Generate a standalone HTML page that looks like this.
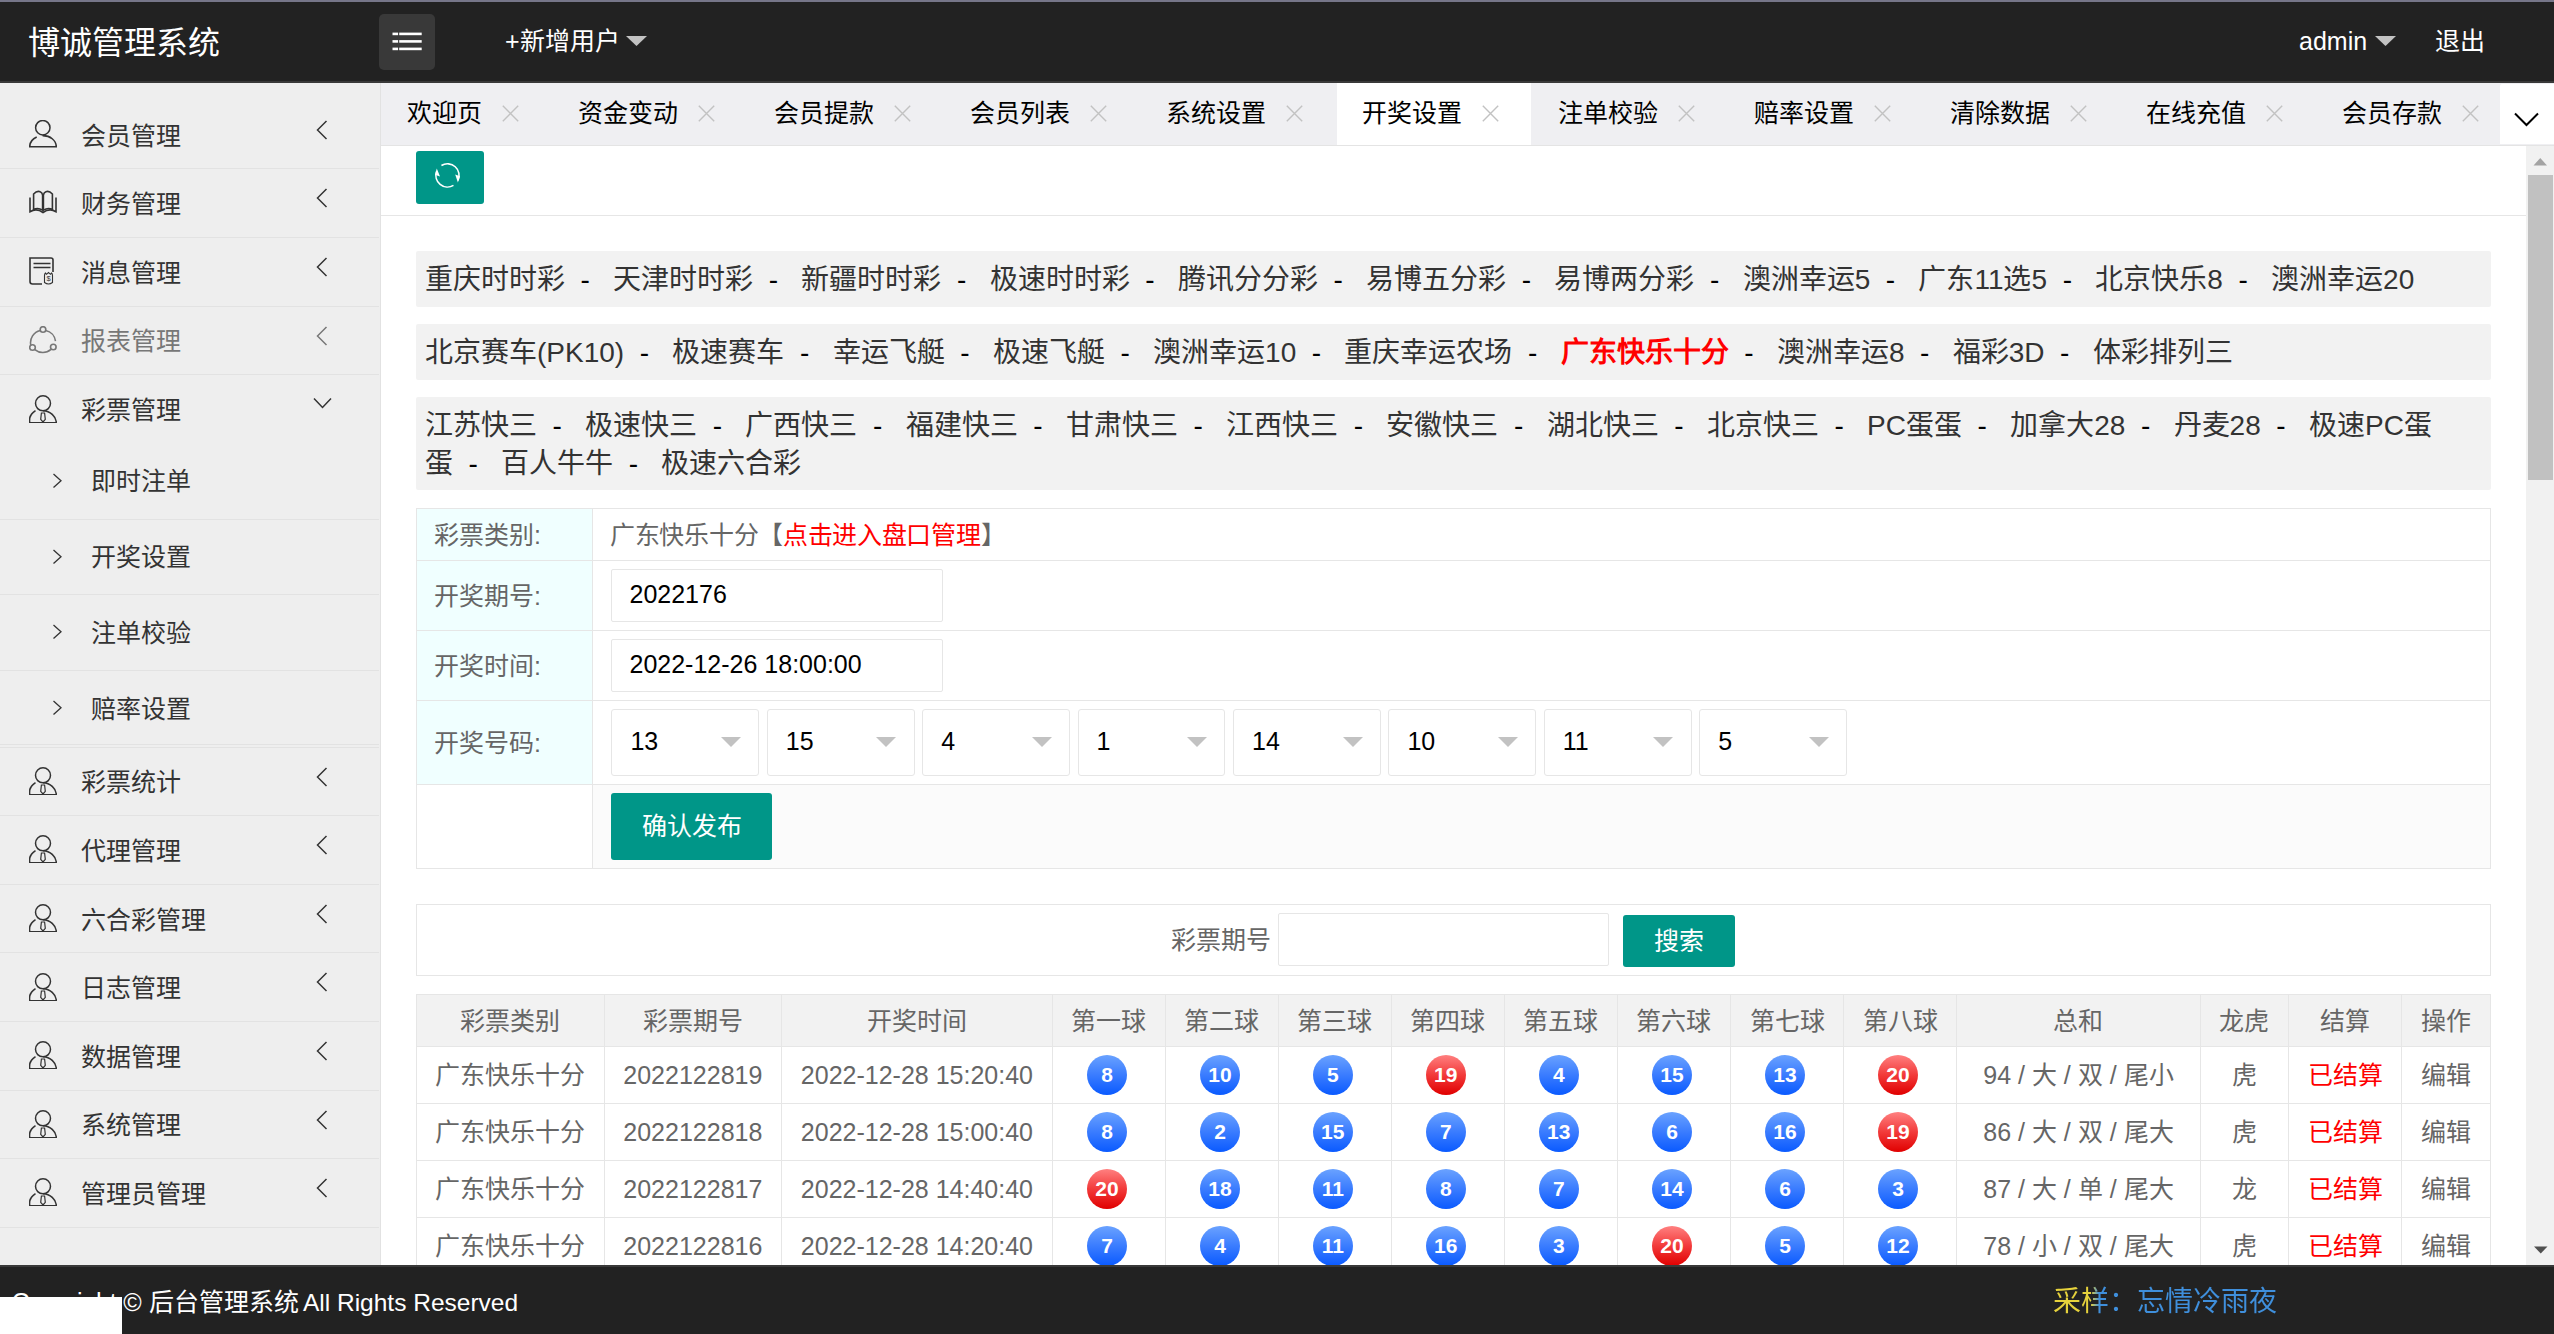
<!DOCTYPE html><html lang="zh-CN"><head><meta charset="utf-8"><title>开奖设置</title><style>
*{box-sizing:border-box;margin:0;padding:0}
html,body{width:2554px;height:1334px;overflow:hidden;background:#fff}
body{position:relative;font-family:"Liberation Sans",sans-serif;color:#333;font-size:25px}
.abs{position:absolute}
.nw{white-space:nowrap}
#strip{left:0;top:0;width:2554px;height:2px;background:#767689}
#hdr{left:0;top:2px;width:2554px;height:79px;background:#222}
#hdrline{left:0;top:81px;width:2554px;height:2px;background:#393939}
#side{left:0;top:83px;width:380px;height:1182px;background:#eee}
#sideb{left:380px;top:83px;width:1px;height:1182px;background:#e2e2e2}
#tabs{left:381px;top:83px;width:2173px;height:62px;background:#efeff2}
#tabsline{left:381px;top:145px;width:2173px;height:1px;background:#e4e4e4}
#foot{left:0;top:1265px;width:2554px;height:69px;background:#222}
#footline{left:0;top:1265px;width:2554px;height:2px;background:#393939}
.sep{height:1px;background:#e2e2e2;left:0;width:379px}
.mi{left:82px;color:#333;line-height:40px;height:40px}
.chev{left:316px}
.tab{top:83px;height:61px}
.tt{top:0;line-height:61px;color:#000;white-space:nowrap}
.lrow{left:416px;width:2075px;background:#f2f2f2;border-radius:2px;padding-left:9px;font-size:28px;color:#333;white-space:nowrap}
.lrow b{font-weight:normal;color:#000}
.lrow .red{color:#f00;font-weight:bold}
.ball{width:40px;height:40px;border-radius:50%;color:#fff;font-weight:bold;font-size:21px;line-height:40px;text-align:center;font-family:"Liberation Sans",sans-serif}
.bb{background:linear-gradient(180deg,#6aa2ff 0%,#3a7cff 50%,#0a5aff 100%)}
.rb{background:linear-gradient(180deg,#ff8080 0%,#f23a3a 50%,#e00000 100%)}
</style></head><body><div id="strip" class="abs"></div><div id="hdr" class="abs"></div><div id="hdrline" class="abs"></div><div class="abs nw" style="left:28px;top:23px;font-size:32px;line-height:40px;color:#fff">博诚管理系统</div><div class="abs" style="left:379px;top:14px;width:56px;height:56px;background:#393939;border-radius:5px"></div><svg class="abs" style="left:379px;top:14px" width="56" height="56"><g fill="#fff"><rect x="13.5" y="18.6" width="5.6" height="2.6"/><rect x="20.2" y="18.6" width="22.5" height="2.6"/><rect x="13.5" y="26.1" width="5.6" height="2.6"/><rect x="20.2" y="26.1" width="22.5" height="2.6"/><rect x="13.5" y="33.6" width="5.6" height="2.6"/><rect x="20.2" y="33.6" width="22.5" height="2.6"/></g></svg><div class="abs nw" style="left:505px;top:21px;font-size:25px;line-height:40px;color:#fff">+新增用户</div><svg class="abs" style="left:626px;top:36px" width="21" height="10"><path d="M0 0H21L10.5 10Z" fill="#c2c2c2"/></svg><div class="abs nw" style="left:2299px;top:21px;font-size:25px;line-height:40px;color:#fff">admin</div><svg class="abs" style="left:2375px;top:36px" width="21" height="10"><path d="M0 0H21L10.5 10Z" fill="#c2c2c2"/></svg><div class="abs nw" style="left:2435px;top:21px;font-size:25px;line-height:40px;color:#fff">退出</div><div id="side" class="abs"></div><div id="sideb" class="abs"></div><svg class="abs" style="left:29px;top:120.0px" width="28" height="28"><circle cx="13.8" cy="7.7" r="7.2" fill="none" stroke="#333" stroke-width="1.5"/><path d="M7.7 16.9 A13.3 11.1 0 0 0 0.75 26.7 H27.25 A13.3 11.1 0 0 0 13.6 15.6" fill="none" stroke="#333" stroke-width="1.6"/></svg><div class="abs nw" style="left:81px;top:115.5px;font-size:25px;line-height:40px;color:#333">会员管理</div><svg class="abs" style="left:315.5px;top:119.7px" width="12" height="22"><path d="M10.5 1 L1.5 10 L10.5 19" fill="none" stroke="#333" stroke-width="1.5"/></svg><svg class="abs" style="left:29px;top:188.7px" width="28" height="28"><g fill="none" stroke="#333" stroke-width="1.6" transform="translate(0,2)"><path d="M1 6.5V20.7 Q7.5 16.8 14 21.5 Q20.5 16.8 27 20.7V6.5"/><path d="M4.6 18.5V3 Q8 -0.6 11.2 0.8 Q13.2 1.6 13.6 4V19.2 Q9 16.2 4.6 18.5Z"/><path d="M23.4 18.5V3 Q20 -0.6 16.8 0.8 Q14.8 1.6 14.4 4V19.2 Q19 16.2 23.4 18.5Z"/></g></svg><div class="abs nw" style="left:81px;top:184.2px;font-size:25px;line-height:40px;color:#333">财务管理</div><svg class="abs" style="left:315.5px;top:188.4px" width="12" height="22"><path d="M10.5 1 L1.5 10 L10.5 19" fill="none" stroke="#333" stroke-width="1.5"/></svg><svg class="abs" style="left:29px;top:257.3px" width="28" height="28"><g fill="none" stroke="#333" stroke-width="1.6"><path d="M13 27H3.5Q1 27 1 24.5V1H22Q24 1 24 3V15"/><path d="M4.5 6.5H21.5M4.5 10.5H21.5" stroke-width="1.5"/><path d="M15.5 18.5Q15.5 17 16.5 16L17.5 17.3L19.5 15.5L21.5 17.3L22.5 16Q23.5 17 23.5 18.5V25.5Q19.5 28.5 15.5 25.5Z" stroke-width="1.1"/><text x="19.5" y="24.3" font-size="7.5" text-anchor="middle" fill="#333" stroke="none" font-family="Liberation Sans">$</text></g></svg><div class="abs nw" style="left:81px;top:252.8px;font-size:25px;line-height:40px;color:#333">消息管理</div><svg class="abs" style="left:315.5px;top:257.0px" width="12" height="22"><path d="M10.5 1 L1.5 10 L10.5 19" fill="none" stroke="#333" stroke-width="1.5"/></svg><svg class="abs" style="left:29px;top:325.9px" width="28" height="28"><g fill="none" stroke="#777" stroke-width="1.6"><circle cx="14" cy="3.5" r="2.8"/><circle cx="3.5" cy="21.5" r="2.8"/><circle cx="24.3" cy="21" r="2.8"/><path d="M11.3 4.5 A12.5 12.5 0 0 0 1.8 19.2"/><path d="M16.7 4.5 A12.5 12.5 0 0 1 26.5 15.2"/><path d="M5.8 23.6 A12.5 12.5 0 0 0 22 23.4"/></g></svg><div class="abs nw" style="left:81px;top:321.4px;font-size:25px;line-height:40px;color:#777">报表管理</div><svg class="abs" style="left:315.5px;top:325.6px" width="12" height="22"><path d="M10.5 1 L1.5 10 L10.5 19" fill="none" stroke="#777" stroke-width="1.5"/></svg><svg class="abs" style="left:29px;top:394.5px" width="28" height="28"><circle cx="14" cy="8.3" r="7.5" fill="none" stroke="#333" stroke-width="1.5"/><path d="M6.5 15.6 A14 12.5 0 0 0 0.7 27.7 H27.3 A14 12.5 0 0 0 14 15.8" fill="none" stroke="#333" stroke-width="1.6"/><path d="M12.4 18H15.6L16.3 24.4L14 27L11.7 24.4Z" fill="none" stroke="#333" stroke-width="1.2"/></svg><div class="abs nw" style="left:81px;top:390.0px;font-size:25px;line-height:40px;color:#333">彩票管理</div><svg class="abs" style="left:312.5px;top:396.5px" width="20" height="14"><path d="M1 1.5 L9.5 10.5 L18 1.5" fill="none" stroke="#333" stroke-width="1.5"/></svg><div class="abs sep" style="top:168.3px"></div><div class="abs sep" style="top:237.0px"></div><div class="abs sep" style="top:305.6px"></div><div class="abs sep" style="top:374.2px"></div><svg class="abs" style="left:51.5px;top:472.7px" width="11" height="16"><path d="M1.5 1 L9 7.8 L1.5 14.6" fill="none" stroke="#333" stroke-width="1.3"/></svg><div class="abs nw" style="left:91px;top:461.2px;font-size:25px;line-height:40px;color:#333">即时注单</div><div class="abs sep" style="top:518.6px"></div><svg class="abs" style="left:51.5px;top:548.5px" width="11" height="16"><path d="M1.5 1 L9 7.8 L1.5 14.6" fill="none" stroke="#333" stroke-width="1.3"/></svg><div class="abs nw" style="left:91px;top:537.0px;font-size:25px;line-height:40px;color:#333">开奖设置</div><div class="abs sep" style="top:594.4px"></div><svg class="abs" style="left:51.5px;top:624.3px" width="11" height="16"><path d="M1.5 1 L9 7.8 L1.5 14.6" fill="none" stroke="#333" stroke-width="1.3"/></svg><div class="abs nw" style="left:91px;top:612.8px;font-size:25px;line-height:40px;color:#333">注单校验</div><div class="abs sep" style="top:670.2px"></div><svg class="abs" style="left:51.5px;top:700.1px" width="11" height="16"><path d="M1.5 1 L9 7.8 L1.5 14.6" fill="none" stroke="#333" stroke-width="1.3"/></svg><div class="abs nw" style="left:91px;top:688.6px;font-size:25px;line-height:40px;color:#333">赔率设置</div><div class="abs sep" style="top:743.8px"></div><svg class="abs" style="left:29px;top:766.8px" width="28" height="28"><circle cx="14" cy="8.3" r="7.5" fill="none" stroke="#333" stroke-width="1.5"/><path d="M6.5 15.6 A14 12.5 0 0 0 0.7 27.7 H27.3 A14 12.5 0 0 0 14 15.8" fill="none" stroke="#333" stroke-width="1.6"/><path d="M12.4 18H15.6L16.3 24.4L14 27L11.7 24.4Z" fill="none" stroke="#333" stroke-width="1.2"/></svg><div class="abs nw" style="left:81px;top:762.3px;font-size:25px;line-height:40px;color:#333">彩票统计</div><svg class="abs" style="left:315.5px;top:766.5px" width="12" height="22"><path d="M10.5 1 L1.5 10 L10.5 19" fill="none" stroke="#333" stroke-width="1.5"/></svg><div class="abs sep" style="top:815.1px"></div><svg class="abs" style="left:29px;top:835.4px" width="28" height="28"><circle cx="14" cy="8.3" r="7.5" fill="none" stroke="#333" stroke-width="1.5"/><path d="M6.5 15.6 A14 12.5 0 0 0 0.7 27.7 H27.3 A14 12.5 0 0 0 14 15.8" fill="none" stroke="#333" stroke-width="1.6"/><path d="M12.4 18H15.6L16.3 24.4L14 27L11.7 24.4Z" fill="none" stroke="#333" stroke-width="1.2"/></svg><div class="abs nw" style="left:81px;top:830.9px;font-size:25px;line-height:40px;color:#333">代理管理</div><svg class="abs" style="left:315.5px;top:835.1px" width="12" height="22"><path d="M10.5 1 L1.5 10 L10.5 19" fill="none" stroke="#333" stroke-width="1.5"/></svg><div class="abs sep" style="top:883.7px"></div><svg class="abs" style="left:29px;top:904.0px" width="28" height="28"><circle cx="14" cy="8.3" r="7.5" fill="none" stroke="#333" stroke-width="1.5"/><path d="M6.5 15.6 A14 12.5 0 0 0 0.7 27.7 H27.3 A14 12.5 0 0 0 14 15.8" fill="none" stroke="#333" stroke-width="1.6"/><path d="M12.4 18H15.6L16.3 24.4L14 27L11.7 24.4Z" fill="none" stroke="#333" stroke-width="1.2"/></svg><div class="abs nw" style="left:81px;top:899.5px;font-size:25px;line-height:40px;color:#333">六合彩管理</div><svg class="abs" style="left:315.5px;top:903.7px" width="12" height="22"><path d="M10.5 1 L1.5 10 L10.5 19" fill="none" stroke="#333" stroke-width="1.5"/></svg><div class="abs sep" style="top:952.3px"></div><svg class="abs" style="left:29px;top:972.6px" width="28" height="28"><circle cx="14" cy="8.3" r="7.5" fill="none" stroke="#333" stroke-width="1.5"/><path d="M6.5 15.6 A14 12.5 0 0 0 0.7 27.7 H27.3 A14 12.5 0 0 0 14 15.8" fill="none" stroke="#333" stroke-width="1.6"/><path d="M12.4 18H15.6L16.3 24.4L14 27L11.7 24.4Z" fill="none" stroke="#333" stroke-width="1.2"/></svg><div class="abs nw" style="left:81px;top:968.1px;font-size:25px;line-height:40px;color:#333">日志管理</div><svg class="abs" style="left:315.5px;top:972.3px" width="12" height="22"><path d="M10.5 1 L1.5 10 L10.5 19" fill="none" stroke="#333" stroke-width="1.5"/></svg><div class="abs sep" style="top:1020.9px"></div><svg class="abs" style="left:29px;top:1041.2px" width="28" height="28"><circle cx="14" cy="8.3" r="7.5" fill="none" stroke="#333" stroke-width="1.5"/><path d="M6.5 15.6 A14 12.5 0 0 0 0.7 27.7 H27.3 A14 12.5 0 0 0 14 15.8" fill="none" stroke="#333" stroke-width="1.6"/><path d="M12.4 18H15.6L16.3 24.4L14 27L11.7 24.4Z" fill="none" stroke="#333" stroke-width="1.2"/></svg><div class="abs nw" style="left:81px;top:1036.7px;font-size:25px;line-height:40px;color:#333">数据管理</div><svg class="abs" style="left:315.5px;top:1040.9px" width="12" height="22"><path d="M10.5 1 L1.5 10 L10.5 19" fill="none" stroke="#333" stroke-width="1.5"/></svg><div class="abs sep" style="top:1089.5px"></div><svg class="abs" style="left:29px;top:1109.8px" width="28" height="28"><circle cx="14" cy="8.3" r="7.5" fill="none" stroke="#333" stroke-width="1.5"/><path d="M6.5 15.6 A14 12.5 0 0 0 0.7 27.7 H27.3 A14 12.5 0 0 0 14 15.8" fill="none" stroke="#333" stroke-width="1.6"/><path d="M12.4 18H15.6L16.3 24.4L14 27L11.7 24.4Z" fill="none" stroke="#333" stroke-width="1.2"/></svg><div class="abs nw" style="left:81px;top:1105.3px;font-size:25px;line-height:40px;color:#333">系统管理</div><svg class="abs" style="left:315.5px;top:1109.5px" width="12" height="22"><path d="M10.5 1 L1.5 10 L10.5 19" fill="none" stroke="#333" stroke-width="1.5"/></svg><div class="abs sep" style="top:1158.1px"></div><svg class="abs" style="left:29px;top:1178.4px" width="28" height="28"><circle cx="14" cy="8.3" r="7.5" fill="none" stroke="#333" stroke-width="1.5"/><path d="M6.5 15.6 A14 12.5 0 0 0 0.7 27.7 H27.3 A14 12.5 0 0 0 14 15.8" fill="none" stroke="#333" stroke-width="1.6"/><path d="M12.4 18H15.6L16.3 24.4L14 27L11.7 24.4Z" fill="none" stroke="#333" stroke-width="1.2"/></svg><div class="abs nw" style="left:81px;top:1173.9px;font-size:25px;line-height:40px;color:#333">管理员管理</div><svg class="abs" style="left:315.5px;top:1178.1px" width="12" height="22"><path d="M10.5 1 L1.5 10 L10.5 19" fill="none" stroke="#333" stroke-width="1.5"/></svg><div class="abs sep" style="top:1226.7px"></div><div class="abs sep" style="top:746.5px"></div><div id="tabs" class="abs"></div><div id="tabsline" class="abs"></div><div class="abs nw" style="left:407.0px;top:93px;font-size:25px;line-height:40px;color:#000">欢迎页</div><svg class="abs" style="left:502.0px;top:105px" width="17" height="17"><path d="M0.8 0.8L16.2 16.2M16.2 0.8L0.8 16.2" stroke="#c2c2c2" stroke-width="1.4"/></svg><div class="abs nw" style="left:578.0px;top:93px;font-size:25px;line-height:40px;color:#000">资金变动</div><svg class="abs" style="left:698.0px;top:105px" width="17" height="17"><path d="M0.8 0.8L16.2 16.2M16.2 0.8L0.8 16.2" stroke="#c2c2c2" stroke-width="1.4"/></svg><div class="abs nw" style="left:774.0px;top:93px;font-size:25px;line-height:40px;color:#000">会员提款</div><svg class="abs" style="left:894.0px;top:105px" width="17" height="17"><path d="M0.8 0.8L16.2 16.2M16.2 0.8L0.8 16.2" stroke="#c2c2c2" stroke-width="1.4"/></svg><div class="abs nw" style="left:970.0px;top:93px;font-size:25px;line-height:40px;color:#000">会员列表</div><svg class="abs" style="left:1090.0px;top:105px" width="17" height="17"><path d="M0.8 0.8L16.2 16.2M16.2 0.8L0.8 16.2" stroke="#c2c2c2" stroke-width="1.4"/></svg><div class="abs nw" style="left:1166.0px;top:93px;font-size:25px;line-height:40px;color:#000">系统设置</div><svg class="abs" style="left:1286.0px;top:105px" width="17" height="17"><path d="M0.8 0.8L16.2 16.2M16.2 0.8L0.8 16.2" stroke="#c2c2c2" stroke-width="1.4"/></svg><div class="abs" style="left:1337.0px;top:83px;width:194.0px;height:62px;background:#fff"></div><div class="abs nw" style="left:1362.0px;top:93px;font-size:25px;line-height:40px;color:#000">开奖设置</div><svg class="abs" style="left:1482.0px;top:105px" width="17" height="17"><path d="M0.8 0.8L16.2 16.2M16.2 0.8L0.8 16.2" stroke="#c2c2c2" stroke-width="1.4"/></svg><div class="abs nw" style="left:1558.0px;top:93px;font-size:25px;line-height:40px;color:#000">注单校验</div><svg class="abs" style="left:1678.0px;top:105px" width="17" height="17"><path d="M0.8 0.8L16.2 16.2M16.2 0.8L0.8 16.2" stroke="#c2c2c2" stroke-width="1.4"/></svg><div class="abs nw" style="left:1754.0px;top:93px;font-size:25px;line-height:40px;color:#000">赔率设置</div><svg class="abs" style="left:1874.0px;top:105px" width="17" height="17"><path d="M0.8 0.8L16.2 16.2M16.2 0.8L0.8 16.2" stroke="#c2c2c2" stroke-width="1.4"/></svg><div class="abs nw" style="left:1950.0px;top:93px;font-size:25px;line-height:40px;color:#000">清除数据</div><svg class="abs" style="left:2070.0px;top:105px" width="17" height="17"><path d="M0.8 0.8L16.2 16.2M16.2 0.8L0.8 16.2" stroke="#c2c2c2" stroke-width="1.4"/></svg><div class="abs nw" style="left:2146.0px;top:93px;font-size:25px;line-height:40px;color:#000">在线充值</div><svg class="abs" style="left:2266.0px;top:105px" width="17" height="17"><path d="M0.8 0.8L16.2 16.2M16.2 0.8L0.8 16.2" stroke="#c2c2c2" stroke-width="1.4"/></svg><div class="abs nw" style="left:2342.0px;top:93px;font-size:25px;line-height:40px;color:#000">会员存款</div><svg class="abs" style="left:2462.0px;top:105px" width="17" height="17"><path d="M0.8 0.8L16.2 16.2M16.2 0.8L0.8 16.2" stroke="#c2c2c2" stroke-width="1.4"/></svg><div class="abs" style="left:2500px;top:84px;width:54px;height:60px;background:#fff;border-radius:2px 0 0 0"></div><svg class="abs" style="left:2514px;top:112px" width="26" height="15"><path d="M1 1.5L12.5 13L24 1.5" fill="none" stroke="#000" stroke-width="2"/></svg><div class="abs" style="left:416px;top:151px;width:68px;height:53px;background:#009688;border-radius:3px"></div><svg class="abs" style="left:432px;top:160px" width="32" height="32"><g fill="none" stroke="#fff" stroke-width="1.6"><path d="M9.44 5.5 A11.6 11.6 0 0 1 26.01 20.3"/><path d="M21.47 25.34 A11.6 11.6 0 0 1 4.6 11.43"/></g><path d="M25.9 22.4 L27.9 16.2 L23.2 14.6Z M4.8 8.5 L3.0 14.8 L8.0 16.6Z" fill="#fff"/></svg><div class="abs" style="left:381px;top:215px;width:2145px;height:1px;background:#e6e6e6"></div><div class="abs lrow" style="top:251px;height:56px;line-height:58px">重庆时时彩&nbsp;&nbsp;<b>-</b>&nbsp;&nbsp;&nbsp;天津时时彩&nbsp;&nbsp;<b>-</b>&nbsp;&nbsp;&nbsp;新疆时时彩&nbsp;&nbsp;<b>-</b>&nbsp;&nbsp;&nbsp;极速时时彩&nbsp;&nbsp;<b>-</b>&nbsp;&nbsp;&nbsp;腾讯分分彩&nbsp;&nbsp;<b>-</b>&nbsp;&nbsp;&nbsp;易博五分彩&nbsp;&nbsp;<b>-</b>&nbsp;&nbsp;&nbsp;易博两分彩&nbsp;&nbsp;<b>-</b>&nbsp;&nbsp;&nbsp;澳洲幸运5&nbsp;&nbsp;<b>-</b>&nbsp;&nbsp;&nbsp;广东11选5&nbsp;&nbsp;<b>-</b>&nbsp;&nbsp;&nbsp;北京快乐8&nbsp;&nbsp;<b>-</b>&nbsp;&nbsp;&nbsp;澳洲幸运20</div><div class="abs lrow" style="top:324px;height:56px;line-height:58px">北京赛车(PK10)&nbsp;&nbsp;<b>-</b>&nbsp;&nbsp;&nbsp;极速赛车&nbsp;&nbsp;<b>-</b>&nbsp;&nbsp;&nbsp;幸运飞艇&nbsp;&nbsp;<b>-</b>&nbsp;&nbsp;&nbsp;极速飞艇&nbsp;&nbsp;<b>-</b>&nbsp;&nbsp;&nbsp;澳洲幸运10&nbsp;&nbsp;<b>-</b>&nbsp;&nbsp;&nbsp;重庆幸运农场&nbsp;&nbsp;<b>-</b>&nbsp;&nbsp;&nbsp;<span class="red">广东快乐十分</span>&nbsp;&nbsp;<b>-</b>&nbsp;&nbsp;&nbsp;澳洲幸运8&nbsp;&nbsp;<b>-</b>&nbsp;&nbsp;&nbsp;福彩3D&nbsp;&nbsp;<b>-</b>&nbsp;&nbsp;&nbsp;体彩排列三</div><div class="abs lrow" style="top:397px;height:93px;padding-top:9.5px;line-height:38px">江苏快三&nbsp;&nbsp;<b>-</b>&nbsp;&nbsp;&nbsp;极速快三&nbsp;&nbsp;<b>-</b>&nbsp;&nbsp;&nbsp;广西快三&nbsp;&nbsp;<b>-</b>&nbsp;&nbsp;&nbsp;福建快三&nbsp;&nbsp;<b>-</b>&nbsp;&nbsp;&nbsp;甘肃快三&nbsp;&nbsp;<b>-</b>&nbsp;&nbsp;&nbsp;江西快三&nbsp;&nbsp;<b>-</b>&nbsp;&nbsp;&nbsp;安徽快三&nbsp;&nbsp;<b>-</b>&nbsp;&nbsp;&nbsp;湖北快三&nbsp;&nbsp;<b>-</b>&nbsp;&nbsp;&nbsp;北京快三&nbsp;&nbsp;<b>-</b>&nbsp;&nbsp;&nbsp;PC蛋蛋&nbsp;&nbsp;<b>-</b>&nbsp;&nbsp;&nbsp;加拿大28&nbsp;&nbsp;<b>-</b>&nbsp;&nbsp;&nbsp;丹麦28&nbsp;&nbsp;<b>-</b>&nbsp;&nbsp;&nbsp;极速PC蛋<br>蛋&nbsp;&nbsp;<b>-</b>&nbsp;&nbsp;&nbsp;百人牛牛&nbsp;&nbsp;<b>-</b>&nbsp;&nbsp;&nbsp;极速六合彩</div><div class="abs" style="left:416.0px;top:508.0px;width:2075.0px;height:361.0px;background:#fff;border:1px solid #e6e6e6;"></div><div class="abs" style="left:417.0px;top:509.0px;width:175.0px;height:275.0px;background:#f0ffff;"></div><div class="abs" style="left:593.0px;top:785.0px;width:1897.0px;height:83.0px;background:#fbfbfb;"></div><div class="abs" style="left:416.0px;top:560.0px;width:2075.0px;height:1.0px;background:#e6e6e6;"></div><div class="abs" style="left:416.0px;top:630.0px;width:2075.0px;height:1.0px;background:#e6e6e6;"></div><div class="abs" style="left:416.0px;top:700.0px;width:2075.0px;height:1.0px;background:#e6e6e6;"></div><div class="abs" style="left:416.0px;top:784.0px;width:2075.0px;height:1.0px;background:#e6e6e6;"></div><div class="abs" style="left:592.0px;top:509.0px;width:1.0px;height:359.0px;background:#e6e6e6;"></div><div class="abs nw" style="left:434.0px;top:514.8px;font-size:25px;line-height:40px;color:#666;">彩票类别:</div><div class="abs nw" style="left:434.0px;top:575.8px;font-size:25px;line-height:40px;color:#666;">开奖期号:</div><div class="abs nw" style="left:434.0px;top:645.8px;font-size:25px;line-height:40px;color:#666;">开奖时间:</div><div class="abs nw" style="left:434.0px;top:722.8px;font-size:25px;line-height:40px;color:#666;">开奖号码:</div><div class="abs nw" style="left:610.0px;top:514.8px;font-size:25px;line-height:40px;color:#666;letter-spacing:-0.3px">广东快乐十分【<span style="color:#f00">点击进入盘口管理</span>】</div><div class="abs" style="left:611.0px;top:569.0px;width:332.0px;height:53.0px;background:#fff;border:1px solid #e6e6e6;border-radius:2px;"></div><div class="abs nw" style="left:629.5px;top:574.3px;font-size:25px;line-height:40px;color:#000;">2022176</div><div class="abs" style="left:611.0px;top:639.0px;width:332.0px;height:53.0px;background:#fff;border:1px solid #e6e6e6;border-radius:2px;"></div><div class="abs nw" style="left:629.5px;top:644.3px;font-size:25px;line-height:40px;color:#000;">2022-12-26 18:00:00</div><div class="abs" style="left:611.4px;top:709.0px;width:147.8px;height:66.5px;background:#fff;border:1px solid #e6e6e6;border-radius:3px;"></div><div class="abs nw" style="left:630.4px;top:720.7px;font-size:25px;line-height:40px;color:#000;">13</div><svg class="abs" style="left:721.0px;top:737px" width="20" height="10"><path d="M0 0H20L10 10Z" fill="#c2c2c2"/></svg><div class="abs" style="left:766.8px;top:709.0px;width:147.8px;height:66.5px;background:#fff;border:1px solid #e6e6e6;border-radius:3px;"></div><div class="abs nw" style="left:785.8px;top:720.7px;font-size:25px;line-height:40px;color:#000;">15</div><svg class="abs" style="left:876.4px;top:737px" width="20" height="10"><path d="M0 0H20L10 10Z" fill="#c2c2c2"/></svg><div class="abs" style="left:922.2px;top:709.0px;width:147.8px;height:66.5px;background:#fff;border:1px solid #e6e6e6;border-radius:3px;"></div><div class="abs nw" style="left:941.2px;top:720.7px;font-size:25px;line-height:40px;color:#000;">4</div><svg class="abs" style="left:1031.8px;top:737px" width="20" height="10"><path d="M0 0H20L10 10Z" fill="#c2c2c2"/></svg><div class="abs" style="left:1077.6px;top:709.0px;width:147.8px;height:66.5px;background:#fff;border:1px solid #e6e6e6;border-radius:3px;"></div><div class="abs nw" style="left:1096.6px;top:720.7px;font-size:25px;line-height:40px;color:#000;">1</div><svg class="abs" style="left:1187.2px;top:737px" width="20" height="10"><path d="M0 0H20L10 10Z" fill="#c2c2c2"/></svg><div class="abs" style="left:1233.0px;top:709.0px;width:147.8px;height:66.5px;background:#fff;border:1px solid #e6e6e6;border-radius:3px;"></div><div class="abs nw" style="left:1252.0px;top:720.7px;font-size:25px;line-height:40px;color:#000;">14</div><svg class="abs" style="left:1342.6px;top:737px" width="20" height="10"><path d="M0 0H20L10 10Z" fill="#c2c2c2"/></svg><div class="abs" style="left:1388.4px;top:709.0px;width:147.8px;height:66.5px;background:#fff;border:1px solid #e6e6e6;border-radius:3px;"></div><div class="abs nw" style="left:1407.4px;top:720.7px;font-size:25px;line-height:40px;color:#000;">10</div><svg class="abs" style="left:1498.0px;top:737px" width="20" height="10"><path d="M0 0H20L10 10Z" fill="#c2c2c2"/></svg><div class="abs" style="left:1543.8px;top:709.0px;width:147.8px;height:66.5px;background:#fff;border:1px solid #e6e6e6;border-radius:3px;"></div><div class="abs nw" style="left:1562.8px;top:720.7px;font-size:25px;line-height:40px;color:#000;">11</div><svg class="abs" style="left:1653.4px;top:737px" width="20" height="10"><path d="M0 0H20L10 10Z" fill="#c2c2c2"/></svg><div class="abs" style="left:1699.2px;top:709.0px;width:147.8px;height:66.5px;background:#fff;border:1px solid #e6e6e6;border-radius:3px;"></div><div class="abs nw" style="left:1718.2px;top:720.7px;font-size:25px;line-height:40px;color:#000;">5</div><svg class="abs" style="left:1808.8px;top:737px" width="20" height="10"><path d="M0 0H20L10 10Z" fill="#c2c2c2"/></svg><div class="abs" style="left:611.0px;top:793.0px;width:161.0px;height:67.0px;background:#009688;border-radius:3px;"></div><div class="abs nw" style="left:641.5px;top:806.0px;font-size:25px;line-height:40px;color:#fff;">确认发布</div><div class="abs" style="left:416.0px;top:904.0px;width:2075.0px;height:72.0px;background:#fff;border:1px solid #e6e6e6;"></div><div class="abs nw" style="left:1171.0px;top:919.5px;font-size:25px;line-height:40px;color:#666;">彩票期号</div><div class="abs" style="left:1277.5px;top:913.0px;width:331.5px;height:53.0px;background:#fff;border:1px solid #e6e6e6;border-radius:2px;"></div><div class="abs" style="left:1623.0px;top:915.0px;width:112.0px;height:52.0px;background:#009688;border-radius:3px;"></div><div class="abs nw" style="left:1653.5px;top:920.5px;font-size:25px;line-height:40px;color:#fff;">搜索</div><div class="abs" style="left:416.0px;top:994.0px;width:2075.0px;height:52.0px;background:#f2f2f2;"></div><div class="abs" style="left:416.0px;top:994.0px;width:2075.0px;height:1.0px;background:#e6e6e6;"></div><div class="abs" style="left:416.0px;top:1046.0px;width:2075.0px;height:1.0px;background:#e6e6e6;"></div><div class="abs" style="left:416.0px;top:1103.0px;width:2075.0px;height:1.0px;background:#e6e6e6;"></div><div class="abs" style="left:416.0px;top:1160.0px;width:2075.0px;height:1.0px;background:#e6e6e6;"></div><div class="abs" style="left:416.0px;top:1217.0px;width:2075.0px;height:1.0px;background:#e6e6e6;"></div><div class="abs" style="left:416.0px;top:994.0px;width:1.0px;height:280.0px;background:#e6e6e6;"></div><div class="abs" style="left:603.7px;top:994.0px;width:1.0px;height:280.0px;background:#e6e6e6;"></div><div class="abs" style="left:781.0px;top:994.0px;width:1.0px;height:280.0px;background:#e6e6e6;"></div><div class="abs" style="left:1051.9px;top:994.0px;width:1.0px;height:280.0px;background:#e6e6e6;"></div><div class="abs" style="left:1165.0px;top:994.0px;width:1.0px;height:280.0px;background:#e6e6e6;"></div><div class="abs" style="left:1277.9px;top:994.0px;width:1.0px;height:280.0px;background:#e6e6e6;"></div><div class="abs" style="left:1390.8px;top:994.0px;width:1.0px;height:280.0px;background:#e6e6e6;"></div><div class="abs" style="left:1503.7px;top:994.0px;width:1.0px;height:280.0px;background:#e6e6e6;"></div><div class="abs" style="left:1616.9px;top:994.0px;width:1.0px;height:280.0px;background:#e6e6e6;"></div><div class="abs" style="left:1730.0px;top:994.0px;width:1.0px;height:280.0px;background:#e6e6e6;"></div><div class="abs" style="left:1843.0px;top:994.0px;width:1.0px;height:280.0px;background:#e6e6e6;"></div><div class="abs" style="left:1956.1px;top:994.0px;width:1.0px;height:280.0px;background:#e6e6e6;"></div><div class="abs" style="left:2199.8px;top:994.0px;width:1.0px;height:280.0px;background:#e6e6e6;"></div><div class="abs" style="left:2288.0px;top:994.0px;width:1.0px;height:280.0px;background:#e6e6e6;"></div><div class="abs" style="left:2401.1px;top:994.0px;width:1.0px;height:280.0px;background:#e6e6e6;"></div><div class="abs" style="left:2490.0px;top:994.0px;width:1.0px;height:280.0px;background:#e6e6e6;"></div><div class="abs nw" style="left:416.3px;top:1000.5px;width:187.9px;text-align:center;font-size:25px;line-height:40px;color:#666;">彩票类别</div><div class="abs nw" style="left:604.2px;top:1000.5px;width:177.3px;text-align:center;font-size:25px;line-height:40px;color:#666;">彩票期号</div><div class="abs nw" style="left:781.5px;top:1000.5px;width:270.9px;text-align:center;font-size:25px;line-height:40px;color:#666;">开奖时间</div><div class="abs nw" style="left:1052.4px;top:1000.5px;width:113.1px;text-align:center;font-size:25px;line-height:40px;color:#666;">第一球</div><div class="abs nw" style="left:1165.5px;top:1000.5px;width:112.9px;text-align:center;font-size:25px;line-height:40px;color:#666;">第二球</div><div class="abs nw" style="left:1278.4px;top:1000.5px;width:112.9px;text-align:center;font-size:25px;line-height:40px;color:#666;">第三球</div><div class="abs nw" style="left:1391.3px;top:1000.5px;width:112.9px;text-align:center;font-size:25px;line-height:40px;color:#666;">第四球</div><div class="abs nw" style="left:1504.2px;top:1000.5px;width:113.2px;text-align:center;font-size:25px;line-height:40px;color:#666;">第五球</div><div class="abs nw" style="left:1617.4px;top:1000.5px;width:113.1px;text-align:center;font-size:25px;line-height:40px;color:#666;">第六球</div><div class="abs nw" style="left:1730.5px;top:1000.5px;width:113.0px;text-align:center;font-size:25px;line-height:40px;color:#666;">第七球</div><div class="abs nw" style="left:1843.5px;top:1000.5px;width:113.1px;text-align:center;font-size:25px;line-height:40px;color:#666;">第八球</div><div class="abs nw" style="left:1956.6px;top:1000.5px;width:243.7px;text-align:center;font-size:25px;line-height:40px;color:#666;">总和</div><div class="abs nw" style="left:2200.3px;top:1000.5px;width:88.2px;text-align:center;font-size:25px;line-height:40px;color:#666;">龙虎</div><div class="abs nw" style="left:2288.5px;top:1000.5px;width:113.1px;text-align:center;font-size:25px;line-height:40px;color:#666;">结算</div><div class="abs nw" style="left:2401.6px;top:1000.5px;width:88.9px;text-align:center;font-size:25px;line-height:40px;color:#666;">操作</div><div class="abs nw" style="left:416.3px;top:1054.8px;width:187.9px;text-align:center;font-size:25px;line-height:40px;color:#666;">广东快乐十分</div><div class="abs nw" style="left:604.2px;top:1054.8px;width:177.3px;text-align:center;font-size:25px;line-height:40px;color:#666;">2022122819</div><div class="abs nw" style="left:781.5px;top:1054.8px;width:270.9px;text-align:center;font-size:25px;line-height:40px;color:#666;">2022-12-28 15:20:40</div><div class="abs ball bb" style="left:1087.0px;top:1054.8px">8</div><div class="abs ball bb" style="left:1200.0px;top:1054.8px">10</div><div class="abs ball bb" style="left:1312.8px;top:1054.8px">5</div><div class="abs ball rb" style="left:1425.8px;top:1054.8px">19</div><div class="abs ball bb" style="left:1538.8px;top:1054.8px">4</div><div class="abs ball bb" style="left:1652.0px;top:1054.8px">15</div><div class="abs ball bb" style="left:1765.0px;top:1054.8px">13</div><div class="abs ball rb" style="left:1878.0px;top:1054.8px">20</div><div class="abs nw" style="left:1956.6px;top:1054.8px;width:243.7px;text-align:center;font-size:25px;line-height:40px;color:#666;">94 / 大 / 双 / 尾小</div><div class="abs nw" style="left:2200.3px;top:1054.8px;width:88.2px;text-align:center;font-size:25px;line-height:40px;color:#666;">虎</div><div class="abs nw" style="left:2288.5px;top:1054.8px;width:113.1px;text-align:center;font-size:25px;line-height:40px;color:#f00;">已结算</div><div class="abs nw" style="left:2401.6px;top:1054.8px;width:88.9px;text-align:center;font-size:25px;line-height:40px;color:#666;">编辑</div><div class="abs nw" style="left:416.3px;top:1111.7px;width:187.9px;text-align:center;font-size:25px;line-height:40px;color:#666;">广东快乐十分</div><div class="abs nw" style="left:604.2px;top:1111.7px;width:177.3px;text-align:center;font-size:25px;line-height:40px;color:#666;">2022122818</div><div class="abs nw" style="left:781.5px;top:1111.7px;width:270.9px;text-align:center;font-size:25px;line-height:40px;color:#666;">2022-12-28 15:00:40</div><div class="abs ball bb" style="left:1087.0px;top:1111.7px">8</div><div class="abs ball bb" style="left:1200.0px;top:1111.7px">2</div><div class="abs ball bb" style="left:1312.8px;top:1111.7px">15</div><div class="abs ball bb" style="left:1425.8px;top:1111.7px">7</div><div class="abs ball bb" style="left:1538.8px;top:1111.7px">13</div><div class="abs ball bb" style="left:1652.0px;top:1111.7px">6</div><div class="abs ball bb" style="left:1765.0px;top:1111.7px">16</div><div class="abs ball rb" style="left:1878.0px;top:1111.7px">19</div><div class="abs nw" style="left:1956.6px;top:1111.7px;width:243.7px;text-align:center;font-size:25px;line-height:40px;color:#666;">86 / 大 / 双 / 尾大</div><div class="abs nw" style="left:2200.3px;top:1111.7px;width:88.2px;text-align:center;font-size:25px;line-height:40px;color:#666;">虎</div><div class="abs nw" style="left:2288.5px;top:1111.7px;width:113.1px;text-align:center;font-size:25px;line-height:40px;color:#f00;">已结算</div><div class="abs nw" style="left:2401.6px;top:1111.7px;width:88.9px;text-align:center;font-size:25px;line-height:40px;color:#666;">编辑</div><div class="abs nw" style="left:416.3px;top:1168.6px;width:187.9px;text-align:center;font-size:25px;line-height:40px;color:#666;">广东快乐十分</div><div class="abs nw" style="left:604.2px;top:1168.6px;width:177.3px;text-align:center;font-size:25px;line-height:40px;color:#666;">2022122817</div><div class="abs nw" style="left:781.5px;top:1168.6px;width:270.9px;text-align:center;font-size:25px;line-height:40px;color:#666;">2022-12-28 14:40:40</div><div class="abs ball rb" style="left:1087.0px;top:1168.6px">20</div><div class="abs ball bb" style="left:1200.0px;top:1168.6px">18</div><div class="abs ball bb" style="left:1312.8px;top:1168.6px">11</div><div class="abs ball bb" style="left:1425.8px;top:1168.6px">8</div><div class="abs ball bb" style="left:1538.8px;top:1168.6px">7</div><div class="abs ball bb" style="left:1652.0px;top:1168.6px">14</div><div class="abs ball bb" style="left:1765.0px;top:1168.6px">6</div><div class="abs ball bb" style="left:1878.0px;top:1168.6px">3</div><div class="abs nw" style="left:1956.6px;top:1168.6px;width:243.7px;text-align:center;font-size:25px;line-height:40px;color:#666;">87 / 大 / 单 / 尾大</div><div class="abs nw" style="left:2200.3px;top:1168.6px;width:88.2px;text-align:center;font-size:25px;line-height:40px;color:#666;">龙</div><div class="abs nw" style="left:2288.5px;top:1168.6px;width:113.1px;text-align:center;font-size:25px;line-height:40px;color:#f00;">已结算</div><div class="abs nw" style="left:2401.6px;top:1168.6px;width:88.9px;text-align:center;font-size:25px;line-height:40px;color:#666;">编辑</div><div class="abs nw" style="left:416.3px;top:1225.5px;width:187.9px;text-align:center;font-size:25px;line-height:40px;color:#666;">广东快乐十分</div><div class="abs nw" style="left:604.2px;top:1225.5px;width:177.3px;text-align:center;font-size:25px;line-height:40px;color:#666;">2022122816</div><div class="abs nw" style="left:781.5px;top:1225.5px;width:270.9px;text-align:center;font-size:25px;line-height:40px;color:#666;">2022-12-28 14:20:40</div><div class="abs ball bb" style="left:1087.0px;top:1225.5px">7</div><div class="abs ball bb" style="left:1200.0px;top:1225.5px">4</div><div class="abs ball bb" style="left:1312.8px;top:1225.5px">11</div><div class="abs ball bb" style="left:1425.8px;top:1225.5px">16</div><div class="abs ball bb" style="left:1538.8px;top:1225.5px">3</div><div class="abs ball rb" style="left:1652.0px;top:1225.5px">20</div><div class="abs ball bb" style="left:1765.0px;top:1225.5px">5</div><div class="abs ball bb" style="left:1878.0px;top:1225.5px">12</div><div class="abs nw" style="left:1956.6px;top:1225.5px;width:243.7px;text-align:center;font-size:25px;line-height:40px;color:#666;">78 / 小 / 双 / 尾大</div><div class="abs nw" style="left:2200.3px;top:1225.5px;width:88.2px;text-align:center;font-size:25px;line-height:40px;color:#666;">虎</div><div class="abs nw" style="left:2288.5px;top:1225.5px;width:113.1px;text-align:center;font-size:25px;line-height:40px;color:#f00;">已结算</div><div class="abs nw" style="left:2401.6px;top:1225.5px;width:88.9px;text-align:center;font-size:25px;line-height:40px;color:#666;">编辑</div><div class="abs" style="left:2526.0px;top:146.0px;width:28.0px;height:1119.0px;background:#f1f1f1;"></div><div class="abs" style="left:2528.0px;top:175.0px;width:25.0px;height:305.0px;background:#c1c1c1;"></div><svg class="abs" style="left:2533px;top:157px" width="15" height="9"><path d="M0.5 8.5H14L7.25 1Z" fill="#a3a3a3"/></svg><svg class="abs" style="left:2534px;top:1245.5px" width="14" height="8"><path d="M0 0.5H13.5L6.75 7.5Z" fill="#505050"/></svg><div id="foot" class="abs"></div><div id="footline" class="abs"></div><div class="abs nw" style="left:11.5px;top:1282.0px;font-size:25px;line-height:40px;color:#fff;"><span style="letter-spacing:-0.22px">Copyright </span>© 后台管理系统<span style="font-size:24.5px;margin-left:-2.5px"> All Rights Reserved</span></div><div class="abs" style="left:0.0px;top:1297.0px;width:122.0px;height:37.0px;background:#fff;"></div><div class="abs nw" style="left:2053px;top:1282px;font-size:28px;line-height:40px;background:linear-gradient(90deg,#e6d23c 0px,#e6d23c 38px,#3f8fdc 46px,#3f8fdc 230px);-webkit-background-clip:text;background-clip:text;color:transparent">采样：忘情冷雨夜</div></body></html>
